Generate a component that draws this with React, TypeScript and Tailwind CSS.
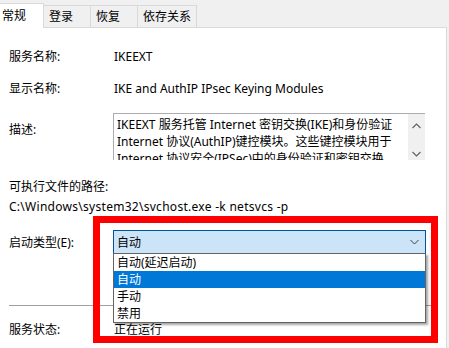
import React from "react";

const tabs = [
  { name: "常规", w: "w-[44px]", active: true },
  { name: "登录", w: "w-[47px]", active: false },
  { name: "恢复", w: "w-[47px]", active: false },
  { name: "依存关系", w: "w-[59px]", active: false },
];

const startupOptions = ["自动(延迟启动)", "自动", "手动", "禁用"];

const Chevron = ({ up = false }: { up?: boolean }) => (
  <svg width="9" height="6" viewBox="0 0 9 6" className="block">
    <path
      d={up ? "M0.5 5 L4.5 1 L8.5 5" : "M0.5 1 L4.5 5 L8.5 1"}
      fill="none"
      stroke="#606060"
      strokeWidth="1.1"
    />
  </svg>
);

export default function App() {
  return (
    <div
      className="relative w-[449px] h-[348px] overflow-hidden bg-[#f0f0f0] text-[12px] text-black"
      style={{ fontFamily: '"Noto Sans", "Noto Sans CJK SC", sans-serif' }}
    >
      {/* tab strip */}
      <div className="flex items-end h-[27px]">
        {tabs.map((t) =>
          t.active ? (
            <div
              key={t.name}
              className={`${t.w} h-[25px] -mb-px bg-white border-r border-t border-[#d9d9d9] pl-[2px] pt-[3px] leading-[17px] relative z-10`}
            >
              {t.name}
            </div>
          ) : (
            <div
              key={t.name}
              className={`${t.w} h-[22px] bg-[#f0f0f0] border-r border-t border-[#d9d9d9] pl-[5px] pt-[2px] leading-[17px]`}
            >
              {t.name}
            </div>
          )
        )}
      </div>

      {/* panel */}
      <div className="w-[447px] h-[330px] bg-white border-t border-r border-[#d9d9d9] pl-[9px] flex flex-col leading-[17px]">
        <div className="flex mt-[20px]">
          <span className="w-[105px]">服务名称:</span>
          <span>IKEEXT</span>
        </div>
        <div className="flex mt-[15px]">
          <span className="w-[105px]">显示名称:</span>
          <span>IKE and AuthIP IPsec Keying Modules</span>
        </div>

        <div className="flex mt-[16px]">
          <span className="w-[104px] pt-[8px]">描述:</span>
          <div className="w-[312px] h-[47px] border-t border-l border-[#abadb3] flex overflow-hidden">
            <div className="flex-1 pl-[3px] pt-[2px] whitespace-nowrap overflow-hidden">
              <div>IKEEXT 服务托管 Internet 密钥交换(IKE)和身份验证</div>
              <div>Internet 协议(AuthIP)键控模块。这些键控模块用于</div>
              <div>Internet 协议安全(IPSec)中的身份验证和密钥交换</div>
            </div>
            <div className="w-[17px] bg-[#f0f0f0] flex flex-col items-center pt-[9px]">
              <Chevron up />
              <div className="mt-[22px]">
                <Chevron />
              </div>
            </div>
          </div>
        </div>

        <div className="mt-[18px]">可执行文件的路径:</div>
        <div className="mt-[3px] whitespace-nowrap tracking-[0.28px]">
          C:\Windows\system32\svchost.exe -k netsvcs -p
        </div>

        <div className="flex items-center mt-[15px] h-[24px]">
          <span className="w-[104px]">启动类型(E):</span>
          <div className="w-[313px] h-[24px] bg-[#cce4f7] border border-[#005499] flex items-center justify-between pl-[3px] pr-[6px]">
            <span>自动</span>
            <svg width="9" height="6" viewBox="0 0 9 6">
              <path d="M0.5 1 L4.5 5 L8.5 1" fill="none" stroke="#404040" strokeWidth="1" />
            </svg>
          </div>
        </div>

        <div className="mt-[51px] w-[428px] h-px bg-[#a0a0a0]" />

        <div className="flex mt-[15px]">
          <span className="w-[105px]">服务状态:</span>
          <span>正在运行</span>
        </div>
      </div>

      {/* open dropdown list */}
      <div className="absolute left-[113px] top-[253px] w-[313px] bg-white border border-[#646464] shadow-[2px_2px_2px_rgba(0,0,0,0.35)] leading-[17px] z-20">
        {startupOptions.map((o, i) => (
          <div
            key={o}
            className={`h-[17px] pl-[3px] ${i === 1 ? "bg-[#0078d7] text-white" : ""}`}
          >
            {o}
          </div>
        ))}
      </div>

      {/* red highlight frame */}
      <div className="absolute left-[93px] top-[216px] w-[345px] h-[127px] border-[7px] border-[#fe0000] z-30" />
    </div>
  );
}
